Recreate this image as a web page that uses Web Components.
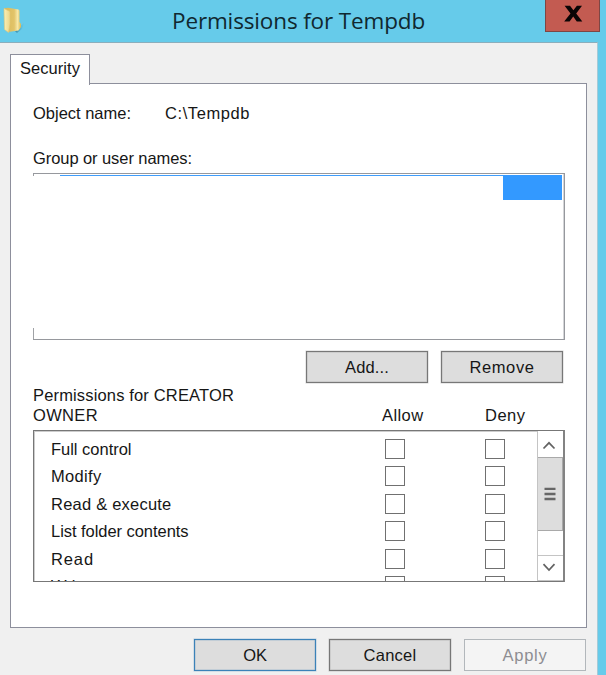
<!DOCTYPE html>
<html lang="en"><head><meta charset="utf-8"><title>Permissions for Tempdb</title>
<style>
html,body{margin:0;height:675px;overflow:hidden;background:#66cbea}
body{font:16.5px/20px "Liberation Sans",Arial,sans-serif;color:#161616}
</style></head><body>
<permissions-dialog></permissions-dialog>
<script>
const define=(name,html,ready)=>customElements.define(name,class extends HTMLElement{
  connectedCallback(){
    if(this.shadowRoot)return;
    const t=document.createElement('template');t.innerHTML=html;
    this.attachShadow({mode:'open'}).append(t.content.cloneNode(true));
    if(ready)ready(this,this.shadowRoot);
  }
});
/* Label whose letters are spaced so that the text fills the width given by "w". */
define('fit-text',`<style>:host{display:block;white-space:pre}span{display:inline-block}</style><span><slot></slot></span>`,(el,root)=>{
  const w=+el.getAttribute('w'),s=root.querySelector('span');
  el.style.width=w+'px';
  s.style.letterSpacing=(w-s.getBoundingClientRect().width)/el.textContent.length+'px';
});
define('push-button',`<style>
:host{display:flex;box-sizing:border-box;width:122px;height:32px;border:1px solid #777;background:#ddd;align-items:center;justify-content:center;box-shadow:0 0 0 .5px #7775,inset 0 0 0 .5px #7775}
:host([primary]){border-color:#3b82b8;box-shadow:0 0 0 .5px #3b82b855,inset 0 0 0 .5px #3b82b855}
:host([disabled]){border-color:#b2b7bb;background:#f4f4f4;color:#8d8d92;box-shadow:none}
</style><slot></slot>`);
define('folder-icon',`<style>:host{display:block;width:25px;height:28px}svg{display:block}</style>
<svg width="25" height="28" viewBox="0 0 25 28"><defs>
<linearGradient id="a" x2="1"><stop stop-color="#fbf0b5"/><stop offset="1" stop-color="#ecd68a"/></linearGradient>
<linearGradient id="b" x2="1"><stop stop-color="#d8b858"/><stop offset=".6" stop-color="#e2c469"/><stop offset=".8" stop-color="#f8e8a6"/><stop offset="1" stop-color="#d9b850"/></linearGradient>
<linearGradient id="s" x2="1"><stop stop-color="#286e86" stop-opacity=".75"/><stop offset="1" stop-color="#55b5d4" stop-opacity="0"/></linearGradient></defs>
<path d="M15 24 L25 15 L22 22 L17 26Z" fill="url(#s)"/>
<path d="M4 1.5 L8 .8 L18.5 2.5 Q19.5 3 19.5 4 V15 L21 17 V20 L18.5 23.5 L8 25Z" fill="url(#b)"/>
<path d="M4 1.5 L10 4.5 V17 L8.5 25.5 L4.5 22.5Z" fill="url(#a)" stroke="#e1c675" stroke-width=".6"/></svg>`);
define('title-bar',`<style>
:host{display:grid;grid-template-columns:172px 1fr 83px;height:42px;box-sizing:border-box;background:#66cbea}
folder-icon{margin-top:7px}
fit-text{font:22.5px/28px "Open Sans",sans-serif;margin-top:7px;color:#102830}
.x{width:55px;height:31.5px;box-sizing:border-box;border:1px solid #7e4644;border-top:0;background:#c35b51;margin-left:calc(100% - 55px - 6px)}
svg{display:block}
</style><folder-icon></folder-icon><fit-text w="253">Permissions for Tempdb</fit-text>
<div class="x"><svg width="53" height="30" viewBox="0 0 53 30"><path d="M18.6 5.7H24L27.4 10.2 30.9 5.7H36L30.2 13.4 36.3 21.4H30.8L27.2 16.6 23.6 21.4H18.2L24.5 13.4Z" fill="#0a0505"/></svg></div>`);
define('user-list',`<style>
:host{display:flex;justify-content:space-between;box-sizing:border-box;width:532px;height:167px;border:1px solid #96989d;border-left:0;padding:1px 2px 0 0;background:
linear-gradient(#9b9da1,#9b9da1) 0 0/1px 2px no-repeat,linear-gradient(#a0a2a6,#a0a2a6) 0 100%/1px 11px no-repeat,#fff;box-shadow:inset -1px 0 #d4d5d8}
.line{height:1px;background:#3f9dfb;margin-left:27px;flex:1}.sel{width:59px;height:25px;background:#3399ff}
</style><div class="line"></div><div class="sel"></div>`);
define('permission-row',`<style>
:host{display:grid;grid-template-columns:333.5px 100px 20px;align-items:center;height:27.5px;padding-left:17px}
i{box-sizing:border-box;width:20px;height:20px;border:1.5px solid #707070;background:#fff;display:block}
</style><slot></slot><i></i><i></i>`);
define('scroll-bar',`<style>
:host{display:flex;flex-direction:column;width:26px;box-sizing:border-box;border-left:1.5px solid #c4c4c4;background:#fff}
div{box-sizing:border-box}svg{display:block}
.u{height:26px;padding-top:1px}.t{height:74px;background:#ddd;border:1px solid #a9a9a9;border-left:0}.g{flex:1}.d{height:26px;border-top:1px solid #c4c4c4;border-bottom:1px solid #c4c4c4}
</style><div class="u"><svg width="24" height="24"><path d="M5.5 16.5L11 10.8 16.5 16.5" fill="none" stroke="#626262" stroke-width="1.7"/></svg></div>
<div class="t"><svg width="24" height="72"><path d="M6.5 30.8H17.5M6.5 36H17.5M6.5 41H17.5" stroke="#666" stroke-width="2.3"/></svg></div>
<div class="g"></div><div class="d"><svg width="24" height="23"><path d="M5.5 8.2L11 14 16.5 8.2" fill="none" stroke="#626262" stroke-width="1.7"/></svg></div>`);
define('permission-list',`<style>
:host{display:flex;box-sizing:border-box;width:532px;height:152px;border:1px solid #777;border-right:2px solid #838383;background:#fff;overflow:hidden;box-shadow:inset 1px 1px #ccc}
.rows{flex:1;overflow:hidden;padding-top:4px;box-sizing:border-box}
</style><div class="rows">
<permission-row><fit-text w="80.5">Full control</fit-text></permission-row>
<permission-row><fit-text w="50.5">Modify</fit-text></permission-row>
<permission-row><fit-text w="120.5">Read &amp; execute</fit-text></permission-row>
<permission-row><fit-text w="137.5">List folder contents</fit-text></permission-row>
<permission-row><fit-text w="43">Read</fit-text></permission-row>
<permission-row><fit-text w="38">Write</fit-text></permission-row>
</div><scroll-bar></scroll-bar>`);
define('tab-panel',`<style>
:host{display:block;width:577px;margin-left:10px}
.tab{position:relative;z-index:1;width:80px;height:31px;box-sizing:border-box;border:1.5px solid #8d8f9c;border-bottom:0;background:#fff;padding:2.5px 0 0 9px;margin-bottom:-2px}
.page{box-sizing:border-box;height:545px;border:1.5px solid #8d8f9c;background:#fff;padding:19px 0 0 22px}
</style><div class="tab"><slot name="tab"></slot></div><div class="page"><slot></slot></div>`);
define('permissions-dialog',`<style>
:host{display:block;width:606px;height:675px;background:#66cbea}
.client{width:598px;height:633px;background:#f0f0f0;box-sizing:border-box;padding-top:11px;border-top:1px solid #8baebc;border-right:1px solid #a5cbd8}
.row{display:flex}
.obj{gap:34px}.group{margin-top:25px}
user-list{margin-top:5px}
.edit{gap:13px;margin:11px 0 0 273px}
.head{display:grid;grid-template-columns:349px 103px 1fr;align-items:end;margin:2px 0 5px}
.foot{gap:13px;margin:11px 0 0 194px}
</style><title-bar></title-bar><div class="client"><tab-panel><fit-text slot="tab" w="60">Security</fit-text>
<div class="row obj"><fit-text w="98">Object name:</fit-text><fit-text w="85">C:\\Tempdb</fit-text></div>
<fit-text class="group" w="159">Group or user names:</fit-text><user-list></user-list>
<div class="row edit"><push-button><fit-text w="44">Add...</fit-text></push-button><push-button><fit-text w="65">Remove</fit-text></push-button></div>
<div class="head"><div><fit-text w="201">Permissions for CREATOR</fit-text><fit-text w="65">OWNER</fit-text></div><fit-text w="41.5">Allow</fit-text><fit-text w="40.5">Deny</fit-text></div>
<permission-list></permission-list></tab-panel>
<div class="row foot"><push-button primary><fit-text w="23.5">OK</fit-text></push-button><push-button><fit-text w="53">Cancel</fit-text></push-button><push-button disabled><fit-text w="45">Apply</fit-text></push-button></div></div>`);
</script></body></html>
